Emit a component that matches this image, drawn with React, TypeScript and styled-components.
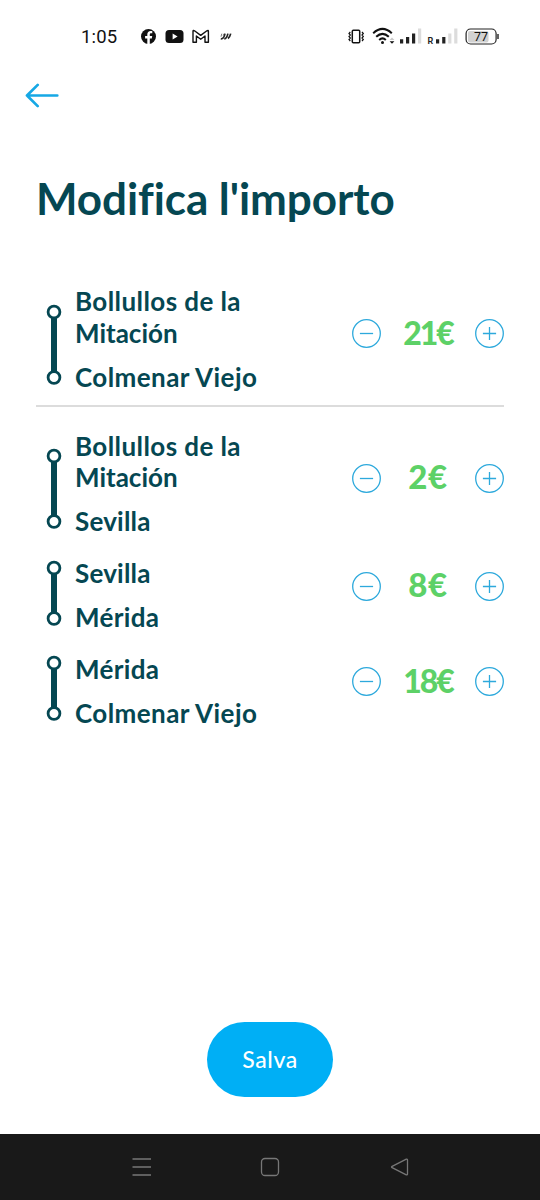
import React from "react";
import styled, { createGlobalStyle } from "styled-components";

const ink = "#054752";
const sky = "#00aff5";

const GlobalStyle = createGlobalStyle`
  * { box-sizing: border-box; }
  body { margin: 0; background: #fff; }
  button { font: inherit; border: 0; padding: 0; background: none; display: block; }
  svg { display: block; flex: none; }
`;

const Screen = styled.div`
  width: 540px;
  height: 1200px;
  display: flex;
  flex-direction: column;
  background: #fff;
  color: ${ink};
  font-family: Lato, "Liberation Sans", sans-serif;
  font-variant-ligatures: none;
  overflow: hidden;
`;

const StatusBar = styled.header`
  height: 72px;
  flex: none;
  display: flex;
  justify-content: space-between;
  padding: 0 41px 0 81px;
  color: #111;
`;

const StatusGroup = styled.div`
  display: flex;
  align-items: center;
`;

const Clock = styled.span`
  width: 59px;
  padding-top: 1px;
  font: 400 18.5px/24px Roboto, sans-serif;
  letter-spacing: 0.2px;
`;

const BackButton = styled.button`
  width: 34px;
  height: 26px;
  margin: 11px 0 0 25px;
`;

const Title = styled.h1`
  margin: 61px 0 2px 36px;
  font-size: 44px;
  line-height: 56px;
  font-weight: 700;
  letter-spacing: -0.07px;
  white-space: nowrap;
`;

const Fares = styled.main`
  flex: 1;
  padding: 58px 36px 0;
`;

const Leg = styled.section<{ $tall?: boolean }>`
  height: ${(p) => (p.$tall ? 107 : 75.5)}px;
  display: flex;
  align-items: flex-start;
  margin-bottom: 20.3px;
`;

const Rail = styled.div<{ $tall?: boolean }>`
  width: 39px;
  padding: ${(p) => (p.$tall ? 17.5 : 1.5)}px 0 0 10px;
`;

const Stops = styled.div`
  flex: 1;
  display: flex;
  flex-direction: column;
  gap: 12.5px;
  font-size: 26px;
  line-height: 31.5px;
  font-weight: 700;
  white-space: nowrap;
`;

const Word = styled.span<{ $spacing: number }>`
  display: block;
  letter-spacing: ${(p) => p.$spacing}px;
`;

const Stepper = styled.div<{ $tall?: boolean }>`
  width: 152px;
  margin-top: ${(p) => (p.$tall ? 32 : 12.5)}px;
  height: 31px;
  display: flex;
  align-items: center;
  justify-content: space-between;
`;

const Amount = styled.output<{ $wide?: boolean }>`
  margin-bottom: 3px;
  font-size: ${(p) => (p.$wide ? 32 : 33)}px;
  line-height: 31px;
  font-weight: 900;
  letter-spacing: ${(p) => (p.$wide ? -2.1 : 0.6)}px;
  color: #5dd167;
`;

const Divider = styled.hr`
  height: 2px;
  border: 0;
  margin: -8.5px 0 24px;
  background: #dcdcdc;
`;

const Footer = styled.footer`
  height: 112px;
  flex: none;
  display: flex;
  justify-content: center;
  align-items: flex-start;
`;

const SaveButton = styled.button`
  && {
    width: 126px;
    height: 75px;
    padding-bottom: 2px;
    border-radius: 38px;
    background: ${sky};
    color: #fff;
    font-size: 23px;
    font-weight: 500;
    letter-spacing: 0.6px;
  }
`;

const NavBar = styled.nav`
  height: 66px;
  flex: none;
  display: flex;
  align-items: center;
  justify-content: space-between;
  padding: 0 131px 0 131px;
  background: #191919;
`;

type Line = [string, number];

const Step = ({ plus }: { plus?: boolean }) => (
  <button aria-label={plus ? "Aumenta" : "Riduci"}>
    <svg width="29" height="29" viewBox="0 0 29 29" fill="none" stroke="#2da9dc" strokeWidth="1.3">
      <circle cx="14.5" cy="14.5" r="13.8" />
      <path d={plus ? "M7.900 14.500h13.200M14.500 7.900v13.200" : "M7.900 14.500h13.200"} />
    </svg>
  </button>
);

const Track = ({ tall }: { tall?: boolean }) => {
  const end = tall ? 73.5 : 58.5;
  return (
    <svg width="16" height={end + 8} viewBox={`0 0 16 ${end + 8}`} fill="none" stroke={ink}>
      <path d={`M8 14V${end - 6}`} strokeWidth="6" />
      <circle cx="8" cy="8" r="5.9" strokeWidth="2.8" fill="#fff" />
      <circle cx="8" cy={end} r="5.9" strokeWidth="2.8" fill="#fff" />
    </svg>
  );
};

const Fare = ({ from, to, price }: { from: Line[]; to: Line; price: string }) => {
  const tall = from.length > 1;
  return (
    <Leg $tall={tall}>
      <Rail $tall={tall}><Track tall={tall} /></Rail>
      <Stops>
        <div>{from.map(([t, s]) => <Word key={t} $spacing={s}>{t}</Word>)}</div>
        <Word $spacing={to[1]}>{to[0]}</Word>
      </Stops>
      <Stepper $tall={tall}>
        <Step />
        <Amount $wide={price.length > 2}>{price}</Amount>
        <Step plus />
      </Stepper>
    </Leg>
  );
};

const bollullos: Line[] = [["Bollullos de la", 0.42], ["Mitación", 0]];
const colmenar: Line = ["Colmenar Viejo", 0.42];
const sevilla: Line = ["Sevilla", 0.2];
const merida: Line = ["Mérida", 0.35];

const NotificationIcons = () => (
  <svg width="94" height="20" viewBox="140 26 94 20">
    <circle cx="148.5" cy="36.5" r="7.5" fill="#111" />
    <path d="M147.3 44.5v-6h-2.2v-2.4h2.2v-1.6c0-2.3 1.3-3.5 3.3-3.5.8 0 1.4.1 1.7.2v2.1h-1.1c-1 0-1.4.5-1.4 1.3v1.5h2.4l-.4 2.4h-2v6z" fill="#fff" />
    <rect x="165.5" y="30" width="18" height="13" rx="3.5" fill="#111" />
    <path d="M172.6 33.6v5.8l5-2.9z" fill="#fff" />
    <path d="M193 42.2V31.400q0-1.500 1.500-.6l6.200 4.600 6.200-4.600q1.500-.9 1.500.6v10.800h-3.400v-6.200l-4.300 3.200-4.300-3.200v6.200z" fill="none" stroke="#111" strokeWidth="1.400" strokeLinejoin="round" />
    <path d="M220.800 38.900q3 .3 4.200-5.300M224.300 38.900q2.500-.3 3.600-5.300M228 38.500q1.800-1.200 2.700-4.900" fill="none" stroke="#222" strokeWidth="1.700" />
    <path d="M221.800 33.700l-.8 3M224 33.700l-.8 2" fill="none" stroke="#555" strokeWidth=".8" />
  </svg>
);

const SystemIcons = () => (
  <svg width="153" height="22" viewBox="346 25 153 22">
    <rect x="352.300" y="30.200" width="7.400" height="12.600" rx="1" fill="none" stroke="#111" strokeWidth="1.500" />
    <path d="M350.300 32l-1.300 1.500 1.300 1.500-1.300 1.500 1.300 1.500-1.300 1.500 1.300 1.500M362 32l1.300 1.500-1.300 1.500 1.300 1.500-1.300 1.500 1.300 1.500-1.300 1.500" fill="none" stroke="#111" strokeWidth="1.200" />
    <g fill="none" stroke="#111" strokeWidth="2">
      <path d="M373.200 33.200q9.300-8.600 18.600 0M376.200 36.800q6.300-5.900 12.600 0M379.200 40q3.300-3.200 6.600 0" />
    </g>
    <circle cx="382.500" cy="42.400" r="1.500" fill="#111" />
    <path d="M389.600 40l2.400-2.400 2.400 2.400z" fill="#c8c8c8" />
    <path d="M389.600 41.300l2.400 2.400 2.400-2.400z" fill="#111" />
    <g fill="#222">
      <path d="M400 39.300h3.200v4.200H400zM406 37h3.200v6.500H406zM412 33.400h3.200v10.100H412z" />
      <path d="M436 39.300h3.200v4.200H436zM442.200 37h3.200v6.500h-3.200z" />
    </g>
    <path d="M418 28.600h3.200v14.900H418zM448.200 33.400h3.200v10.100h-3.200zM454.200 28.600h3.200v14.900h-3.200z" fill="#dcdcdc" />
    <text x="427.500" y="44" fontFamily="Roboto, sans-serif" fontSize="9" fontWeight="600" fill="#222">R</text>
    <rect x="468" y="31" width="20.500" height="11.500" rx="2" fill="#d2d2d2" />
    <rect x="466.100" y="29" width="30" height="15" rx="4.500" fill="none" stroke="#222" strokeWidth="1.200" />
    <path d="M498 34v5" stroke="#222" strokeWidth="1.400" />
    <text x="481" y="41" textAnchor="middle" fontFamily="Roboto, sans-serif" fontSize="12.500" fill="#111">77</text>
  </svg>
);

export default function App() {
  return (
    <Screen>
      <GlobalStyle />
      <StatusBar>
        <StatusGroup>
          <Clock>1:05</Clock>
          <NotificationIcons />
        </StatusGroup>
        <StatusGroup><SystemIcons /></StatusGroup>
      </StatusBar>
      <BackButton aria-label="Indietro">
        <svg width="34" height="26" viewBox="0 0 34 26" fill="none" stroke="#16a8e5" strokeWidth="2.700" strokeLinecap="round" strokeLinejoin="round">
          <path d="M32.300 12.500H2M12.700 1.900L2 12.500l10.700 10.600" />
        </svg>
      </BackButton>
      <Title>Modifica l'importo</Title>
      <Fares>
        <Fare from={bollullos} to={colmenar} price="21€" />
        <Divider />
        <Fare from={bollullos} to={sevilla} price="2€" />
        <Fare from={[sevilla]} to={merida} price="8€" />
        <Fare from={[merida]} to={colmenar} price="18€" />
      </Fares>
      <Footer><SaveButton>Salva</SaveButton></Footer>
      <NavBar>
        <svg width="20" height="20" viewBox="0 0 20 20" stroke="#777" strokeWidth="1.500">
          <path d="M1.500 2h18.500M1.500 10h18.500M1.500 18h18.500" />
        </svg>
        <svg width="20" height="20" viewBox="0 0 20 20" fill="none" stroke="#777" strokeWidth="1.300">
          <rect x="1.500" y="1.500" width="17" height="17" rx="3.500" />
        </svg>
        <svg width="20" height="20" viewBox="0 0 20 20" fill="none" stroke="#777" strokeWidth="1.300" strokeLinejoin="round">
          <path d="M17.300 2.200L3.100 9.300q-1.100.7 0 1.400l14.200 7.100q1.200.4 1.200-.9V3.100q0-1.300-1.200-.9z" />
        </svg>
      </NavBar>
    </Screen>
  );
}
